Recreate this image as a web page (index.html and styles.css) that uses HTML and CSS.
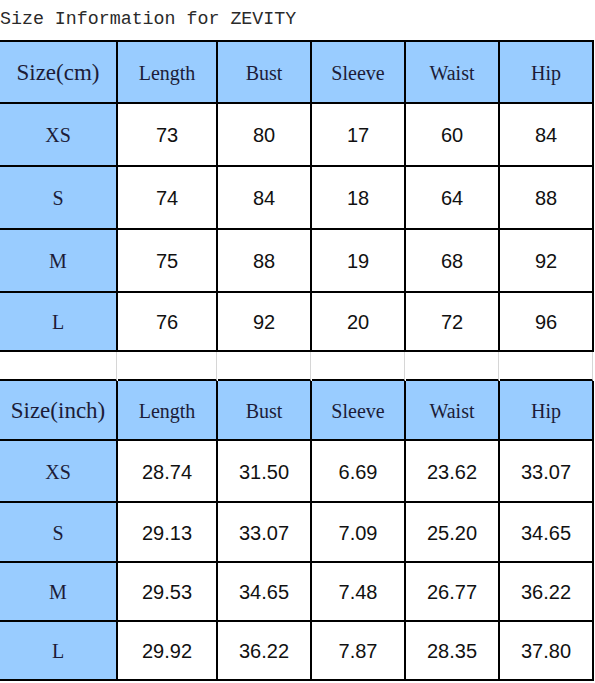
FILE: index.html
```html
<!DOCTYPE html>
<html>
<head>
<meta charset="utf-8">
<link rel="stylesheet" href="styles.css">
</head>
<body>
<div class="title">Size Information for ZEVITY</div>
<div class="sheet">
  <div class="c hd first">Size(cm)</div>
  <div class="c hd">Length</div>
  <div class="c hd">Bust</div>
  <div class="c hd">Sleeve</div>
  <div class="c hd">Waist</div>
  <div class="c hd">Hip</div>

  <div class="c lbl">XS</div><div class="c num">73</div><div class="c num">80</div><div class="c num">17</div><div class="c num">60</div><div class="c num">84</div>
  <div class="c lbl">S</div><div class="c num">74</div><div class="c num">84</div><div class="c num">18</div><div class="c num">64</div><div class="c num">88</div>
  <div class="c lbl">M</div><div class="c num">75</div><div class="c num">88</div><div class="c num">19</div><div class="c num">68</div><div class="c num">92</div>
  <div class="c lbl">L</div><div class="c num">76</div><div class="c num">92</div><div class="c num">20</div><div class="c num">72</div><div class="c num">96</div>

  <div class="c gap"></div><div class="c gap"></div><div class="c gap"></div><div class="c gap"></div><div class="c gap"></div><div class="c gap"></div>

  <div class="c hd first">Size(inch)</div>
  <div class="c hd">Length</div>
  <div class="c hd">Bust</div>
  <div class="c hd">Sleeve</div>
  <div class="c hd">Waist</div>
  <div class="c hd">Hip</div>

  <div class="c lbl">XS</div><div class="c num">28.74</div><div class="c num">31.50</div><div class="c num">6.69</div><div class="c num">23.62</div><div class="c num">33.07</div>
  <div class="c lbl">S</div><div class="c num">29.13</div><div class="c num">33.07</div><div class="c num">7.09</div><div class="c num">25.20</div><div class="c num">34.65</div>
  <div class="c lbl">M</div><div class="c num">29.53</div><div class="c num">34.65</div><div class="c num">7.48</div><div class="c num">26.77</div><div class="c num">36.22</div>
  <div class="c lbl">L</div><div class="c num">29.92</div><div class="c num">36.22</div><div class="c num">7.87</div><div class="c num">28.35</div><div class="c num">37.80</div>
</div>
</body>
</html>
```

FILE: styles.css
```css
html, body {
  margin: 0;
  padding: 0;
  background: #ffffff;
}
.title {
  height: 40px;
  line-height: 38px;
  font-family: "Liberation Mono", monospace;
  font-size: 18.3px;
  color: #2a2a2a;
  white-space: nowrap;
}
.sheet {
  display: grid;
  width: 594px;
  grid-template-columns: 118px 100px 94px 94px 94px 94px;
  grid-template-rows: 62px 63px 63px 63px 59px 29px 60px 62px 60px 59px 59px;
  border-top: 2px solid #000;
}
.c {
  box-sizing: border-box;
  border-right: 2px solid #000;
  border-bottom: 2px solid #000;
  padding-top: 2px;
  display: flex;
  align-items: center;
  justify-content: center;
}
.hd {
  background: #99ccff;
  color: #1c1c38;
  font-family: "Liberation Serif", serif;
  font-size: 20px;
}
.hd.first {
  font-size: 23px;
}
.lbl {
  background: #99ccff;
  color: #1c1c38;
  font-family: "Liberation Serif", serif;
  font-size: 20px;
}
.num {
  background: #ffffff;
  color: #111111;
  font-family: "Liberation Sans", sans-serif;
  font-size: 20px;
}
.gap {
  background: #ffffff;
  border-right: 1px solid #d6d6d6;
  margin-right: 1px;
}
```
